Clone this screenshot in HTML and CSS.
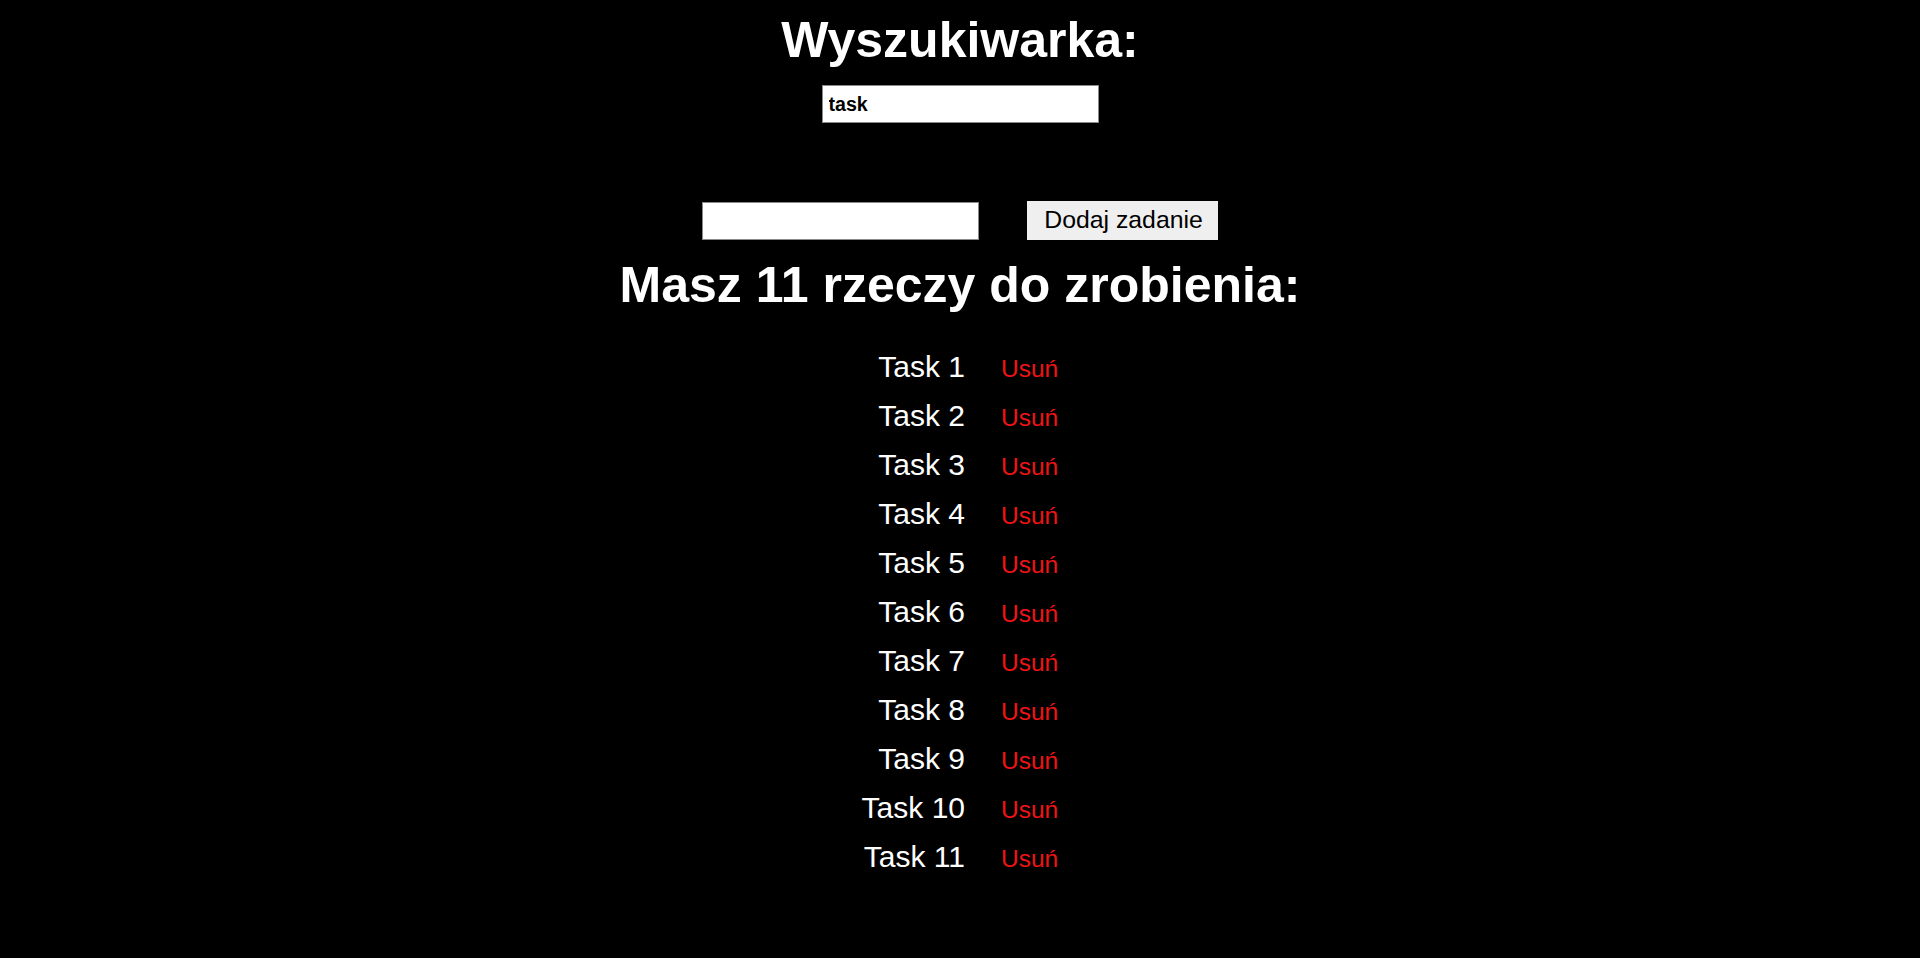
FILE: index.html
```html
<!DOCTYPE html>
<html lang="pl">
<head>
<meta charset="utf-8">
<title>Lista zadań</title>
<link rel="stylesheet" href="styles.css">
</head>
<body>
<main class="app">
  <h1 class="title">Wyszukiwarka:</h1>
  <input class="search" type="text" value="task" autofocus>
  <form class="add-row">
    <input class="add-input" type="text">
    <button class="add-btn" type="button">Dodaj zadanie</button>
  </form>
  <h1 class="title count">Masz 11 rzeczy do zrobienia:</h1>
  <ul class="tasks">
    <li class="task"><span class="task-name">Task 1</span><span class="task-del">Usuń</span></li>
    <li class="task"><span class="task-name">Task 2</span><span class="task-del">Usuń</span></li>
    <li class="task"><span class="task-name">Task 3</span><span class="task-del">Usuń</span></li>
    <li class="task"><span class="task-name">Task 4</span><span class="task-del">Usuń</span></li>
    <li class="task"><span class="task-name">Task 5</span><span class="task-del">Usuń</span></li>
    <li class="task"><span class="task-name">Task 6</span><span class="task-del">Usuń</span></li>
    <li class="task"><span class="task-name">Task 7</span><span class="task-del">Usuń</span></li>
    <li class="task"><span class="task-name">Task 8</span><span class="task-del">Usuń</span></li>
    <li class="task"><span class="task-name">Task 9</span><span class="task-del">Usuń</span></li>
    <li class="task"><span class="task-name">Task 10</span><span class="task-del">Usuń</span></li>
    <li class="task"><span class="task-name">Task 11</span><span class="task-del">Usuń</span></li>
  </ul>
</main>
</body>
</html>
```
FILE: styles.css
```css
html, body {
  margin: 0;
  padding: 0;
  background: #000;
  color: #fff;
  font-family: "Liberation Sans", Arial, sans-serif;
}

.app {
  display: flex;
  flex-direction: column;
  align-items: center;
  padding-top: 12px;
}

.title {
  margin: 0;
  font-size: 50px;
  line-height: 56px;
  font-weight: bold;
  color: #fff;
}

.search {
  box-sizing: border-box;
  margin-top: 17px;
  width: 277px;
  height: 38px;
  padding: 0 6px;
  border: 1px solid #8a8a8a;
  background: #fff;
  color: #000;
  font-family: "Liberation Sans", Arial, sans-serif;
  font-size: 19.6px;
  font-weight: bold;
  outline: none;
}

.add-row {
  margin: 77px 0 0;
  display: flex;
  align-items: center;
  gap: 48px;
}

.add-input {
  box-sizing: border-box;
  width: 277px;
  height: 38px;
  margin-top: 2px;
  padding: 0 6px;
  border: 1px solid #8a8a8a;
  background: #fff;
  font-family: "Liberation Sans", Arial, sans-serif;
  font-size: 19.6px;
  outline: none;
}

.add-btn {
  box-sizing: border-box;
  height: 39px;
  padding: 0 15px 0 17px;
  border: none;
  background: #efefef;
  color: #000;
  font-family: "Liberation Sans", Arial, sans-serif;
  font-size: 24.8px;
}

.count {
  margin-top: 17px;
}

.tasks {
  list-style: none;
  margin: 29px 0 0;
  padding: 0;
  width: 100%;
}

.task {
  display: grid;
  grid-template-columns: calc(50% + 5px) 1fr;
  column-gap: 36px;
  align-items: baseline;
  height: 49px;
}

.task-name {
  text-align: right;
  font-size: 30px;
  line-height: 49px;
  color: #fff;
}

.task-del {
  font-size: 24.5px;
  line-height: 49px;
  color: #f01414;
  cursor: pointer;
}
```
